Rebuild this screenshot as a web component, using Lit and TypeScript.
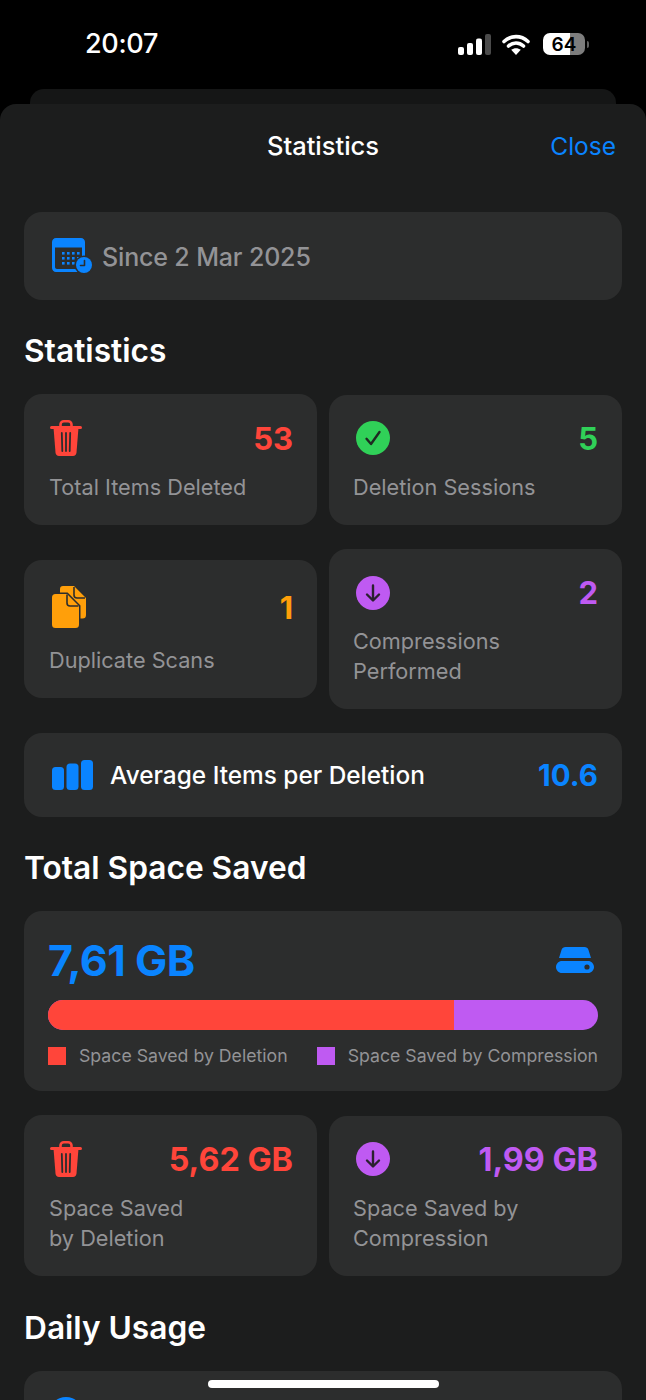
import { LitElement, css, html, svg } from 'lit';
import { customElement } from 'lit/decorators.js';

const trash = html`<svg class="icon trash" width="32" height="36" viewBox="0 0 32 36">
  <path fill="#ff453a" d="M3.500 7.500H28.500L26.500 32.500C26.300 34.500 25 36 23 36H9C7 36 5.700 34.500 5.500 32.500Z"/>
  <rect x="0" y="6" width="32" height="3" rx="1.500" fill="#ff453a"/>
  <path d="M10.500 7V4.500C10.500 2.600 12 1.300 13.800 1.300H18.200C20 1.300 21.500 2.600 21.500 4.500V7" fill="none" stroke="#ff453a" stroke-width="2.600"/>
  <path d="M11.800 13L12.300 31M16 13V31M20.200 13L19.700 31" stroke="#2c2d2d" stroke-width="1.800" stroke-linecap="round"/>
</svg>`;

const check = html`<svg class="icon" width="34" height="34" viewBox="0 0 34 34">
  <circle cx="17" cy="17" r="17" fill="#30d158"/>
  <path d="M10.500 17.800l4.500 5.200 8.500-12" fill="none" stroke="#1f2a22" stroke-width="2.400" stroke-linecap="round" stroke-linejoin="round"/>
</svg>`;

const down = html`<svg class="icon" width="34" height="34" viewBox="0 0 34 34">
  <circle cx="17" cy="17" r="17" fill="#bf5af2"/>
  <path d="M17 9.500v14.500M11 18.500l6 6 6-6" fill="none" stroke="#2b2030" stroke-width="2.400" stroke-linecap="round" stroke-linejoin="round"/>
</svg>`;

const files = html`<svg class="icon" width="34" height="43" viewBox="0 0 34 43">
  <path fill="#ff9f0a" d="M11 0H22L34 12V29A3.500 3.500 0 0 1 30.500 32.500H8V3A3 3 0 0 1 11 0Z"/>
  <path d="M22 1V9A3 3 0 0 0 25 12H33" fill="none" stroke="#2c2d2d" stroke-width="1.600"/>
  <path fill="#ff9f0a" stroke="#2c2d2d" stroke-width="3" paint-order="stroke" d="M3.500 8H15L27 20V38.500A3.500 3.500 0 0 1 23.500 42H3.500A3.500 3.500 0 0 1 0 38.500V11.500A3.500 3.500 0 0 1 3.500 8Z"/>
  <path d="M15 8.500V17A3 3 0 0 0 18 20H26.500" fill="none" stroke="#2c2d2d" stroke-width="1.600"/>
</svg>`;

const bars = html`<svg class="icon" width="41" height="30" viewBox="0 0 41 30">
  <rect x="0" y="7" width="12" height="23" rx="3.500" fill="#0a84ff"/>
  <rect x="14.500" y="3.500" width="12" height="26.500" rx="3.500" fill="#0a84ff"/>
  <rect x="29" y="0" width="12" height="30" rx="3.500" fill="#0a84ff"/>
</svg>`;

const drive = html`<svg class="icon" width="38" height="28" viewBox="0 0 38 28">
  <path fill="#0a84ff" d="M9.500 1h19c1.900 0 3.300 1 3.900 2.800L35 12H3L5.600 3.800C6.200 2 7.600 1 9.500 1z"/>
  <path fill="#0a84ff" fill-rule="evenodd" d="M6 15h26c3.300 0 6 2.700 6 6s-2.700 6-6 6H6c-3.300 0-6-2.700-6-6s2.700-6 6-6zM31 18.400a2.600 2.600 0 1 0 0 5.200 2.600 2.600 0 0 0 0-5.200z"/>
</svg>`;

const dots = [0, 1, 2, 3, 4].flatMap((c) =>
  [0, 1, 2].map((r) => svg`<rect x="${10 + c * 5}" y="${14 + r * 5}" width="2.600" height="2.600" fill="#0a84ff"/>`)
);

const calendar = html`<svg class="icon" width="41" height="36" viewBox="0 0 41 36">
  <path fill="#0a84ff" fill-rule="evenodd" d="M4 0h25c2.200 0 4 1.800 4 4v26c0 2.200-1.800 4-4 4H4c-2.200 0-4-1.800-4-4V4C0 1.800 1.800 0 4 0zM3 9.500V29c0 1.100.9 2 2 2h23c1.100 0 2-.9 2-2V9.500z"/>
  ${dots}
  <circle cx="32" cy="27" r="9.500" fill="#2c2d2d"/>
  <circle cx="32" cy="27" r="8" fill="#0a84ff"/>
  <path d="M32.500 22.500v5h-4" fill="none" stroke="#2c2d2d" stroke-width="1.600" stroke-linecap="round" stroke-linejoin="round"/>
</svg>`;

@customElement('app-root')
export class AppRoot extends LitElement {
  static styles = css`
    :host {
      display: block;
      position: relative;
      width: 646px;
      height: 1400px;
      overflow: hidden;
      background: #000;
      font-family: Inter, 'Liberation Sans', sans-serif;
      color: #fff;
    }

    .status {
      display: flex;
      align-items: center;
      justify-content: space-between;
      height: 32px;
      padding: 28px 57px 29px 85px;
    }
    .time {
      font-size: 27px;
      font-weight: 500;
      line-height: 32px;
      letter-spacing: -0.3px;
    }
    .status-icons {
      display: flex;
      align-items: center;
    }
    .wifi {
      margin-left: 11px;
    }
    .battery {
      display: flex;
      align-items: center;
      justify-content: center;
      width: 42px;
      height: 22px;
      margin-left: 13px;
      border-radius: 7px;
      background: linear-gradient(90deg, #fff 64%, #7d7d7d 64%);
      color: #000;
      font-size: 19px;
      font-weight: 600;
    }
    .nub {
      width: 2px;
      height: 7px;
      margin-left: 2px;
      border-radius: 0 2px 2px 0;
      background: #5e5e5e;
    }

    .back-sheet {
      height: 15px;
      margin: 0 30px;
      border-radius: 14px 14px 0 0;
      background: #151616;
    }

    .sheet {
      height: 1296px;
      padding: 0 24px;
      overflow: hidden;
      border-radius: 16px 16px 0 0;
      background: #1c1d1d;
    }

    .nav {
      display: grid;
      grid-template-columns: 1fr auto 1fr;
      align-items: center;
      height: 32px;
      padding: 26px 0 50px;
    }
    .nav-title {
      grid-column: 2;
      font-size: 25.500px;
      font-weight: 500;
      line-height: 30px;
    }
    .close {
      justify-self: end;
      margin-right: 6px;
      color: #0a84ff;
      font-size: 24.500px;
      line-height: 32px;
    }

    .card {
      border-radius: 18px;
      background: #2c2d2d;
    }

    .since {
      display: flex;
      align-items: center;
      gap: 9px;
      height: 88px;
      padding: 0 28px;
      box-sizing: border-box;
      color: #939396;
      font-size: 25px;
      font-weight: 500;
      letter-spacing: -0.15px;
    }
    .since span {
      padding-top: 2px;
    }

    h2 {
      margin: 31px 0 23px;
      font-size: 31.700px;
      font-weight: 600;
      line-height: 40px;
    }
    h2.last {
      margin: 32px 0 23px;
    }

    .grid {
      display: grid;
      grid-template-columns: 293px 293px;
      column-gap: 12px;
      row-gap: 24px;
      align-items: center;
    }
    .stat {
      padding: 26px 24px 23px;
    }
    .grid .stat:nth-child(odd) {
      padding-left: 25px;
    }
    .stat-top {
      display: flex;
      align-items: center;
      justify-content: space-between;
      min-height: 35px;
      margin-bottom: 16px;
      padding-left: 3px;
    }
    .trash {
      margin-left: -2px;
    }
    .stat-value {
      font-size: 31px;
      font-weight: 700;
      line-height: 35px;
    }
    .stat-value.long {
      font-size: 32.300px;
    }
    .stat-label {
      color: #939396;
      font-size: 21.700px;
      line-height: 30px;
    }
    .icon {
      display: block;
      flex: none;
    }

    .red { color: #ff453a; }
    .green { color: #30d158; }
    .orange { color: #ff9f0a; }
    .purple { color: #bf5af2; }
    .blue { color: #0a84ff; }

    .average {
      display: flex;
      align-items: center;
      height: 84px;
      margin-top: 24px;
      padding: 0 24px 0 28px;
      box-sizing: border-box;
    }
    .average-label {
      flex: 1;
      margin-left: 17px;
      font-size: 24.400px;
      font-weight: 500;
    }
    .average .stat-value {
      font-size: 29.500px;
    }

    .total {
      padding: 29px 24px 26px;
      margin-bottom: 24px;
    }
    .total-top {
      display: flex;
      align-items: center;
      justify-content: space-between;
      height: 40px;
      padding-right: 4px;
    }
    .total-value {
      color: #0a84ff;
      font-size: 43px;
      font-weight: 700;
      letter-spacing: -0.5px;
    }
    .bar {
      display: flex;
      height: 30px;
      margin: 20px 0 17px;
      overflow: hidden;
      border-radius: 15px;
      background: #bf5af2;
    }
    .bar-fill {
      background: #ff453a;
    }
    .legend {
      display: flex;
      justify-content: space-between;
      height: 18px;
      color: #939396;
      font-size: 17.700px;
      line-height: 18px;
    }
    .legend-item {
      display: flex;
      align-items: center;
      gap: 13px;
    }
    .swatch {
      width: 18px;
      height: 18px;
    }

    .daily {
      height: 120px;
      padding: 26px 25px;
      box-sizing: border-box;
    }

    .home {
      position: absolute;
      left: 208px;
      bottom: 12px;
      width: 231px;
      height: 8px;
      border-radius: 4px;
      background: #fff;
    }
  `;

  private stat(icon: unknown, value: string, label: unknown, color: string) {
    return html`<div class="card stat">
      <div class="stat-top">${icon}<span class="stat-value ${color} ${value.length > 3 ? 'long' : ''}">${value}</span></div>
      <div class="stat-label">${label}</div>
    </div>`;
  }

  render() {
    return html`
      <div class="status">
        <span class="time">20:07</span>
        <div class="status-icons">
          <svg width="33" height="21" viewBox="0 0 33 21">
            <rect x="0" y="13" width="6" height="8" rx="2" fill="#fff"/>
            <rect x="9" y="9" width="6" height="12" rx="2" fill="#fff"/>
            <rect x="18" y="4.500" width="6" height="16.500" rx="2" fill="#fff"/>
            <rect x="27" y="0" width="6" height="21" rx="2" fill="#4a4a4a"/>
          </svg>
          <svg class="wifi" width="28" height="21" viewBox="0 0 28 21">
            <path d="M2 7.500C9 1 19 1 26 7.500M6.500 12C11 8 17 8 21.500 12" fill="none" stroke="#fff" stroke-width="3.600" stroke-linecap="round"/>
            <path d="M14 21l-4.800-5.200c2.800-2.200 6.800-2.200 9.600 0z" fill="#fff"/>
          </svg>
          <div class="battery">64</div>
          <div class="nub"></div>
        </div>
      </div>
      <div class="back-sheet"></div>
      <div class="sheet">
        <div class="nav">
          <span class="nav-title">Statistics</span>
          <span class="close">Close</span>
        </div>

        <div class="card since">${calendar}<span>Since 2 Mar 2025</span></div>

        <h2>Statistics</h2>
        <div class="grid">
          ${this.stat(trash, '53', 'Total Items Deleted', 'red')}
          ${this.stat(check, '5', 'Deletion Sessions', 'green')}
          ${this.stat(files, '1', 'Duplicate Scans', 'orange')}
          ${this.stat(down, '2', html`Compressions<br />Performed`, 'purple')}
        </div>
        <div class="card average">
          ${bars}
          <span class="average-label">Average Items per Deletion</span>
          <span class="stat-value blue">10.6</span>
        </div>

        <h2>Total Space Saved</h2>
        <div class="card total">
          <div class="total-top">
            <span class="total-value">7,61 GB</span>
            ${drive}
          </div>
          <div class="bar"><div class="bar-fill" style="width: 73.800%"></div></div>
          <div class="legend">
            <div class="legend-item">
              <div class="swatch" style="background: #ff453a"></div>
              <span>Space Saved by Deletion</span>
            </div>
            <div class="legend-item">
              <div class="swatch" style="background: #bf5af2"></div>
              <span>Space Saved by Compression</span>
            </div>
          </div>
        </div>
        <div class="grid">
          ${this.stat(trash, '5,62 GB', html`Space Saved<br />by Deletion`, 'red')}
          ${this.stat(down, '1,99 GB', html`Space Saved by<br />Compression`, 'purple')}
        </div>

        <h2 class="last">Daily Usage</h2>
        <div class="card daily">
          <svg class="icon" width="34" height="34" viewBox="0 0 34 34">
            <circle cx="17" cy="17" r="17" fill="#0a84ff"/>
          </svg>
        </div>
      </div>
      <div class="home"></div>
    `;
  }
}
